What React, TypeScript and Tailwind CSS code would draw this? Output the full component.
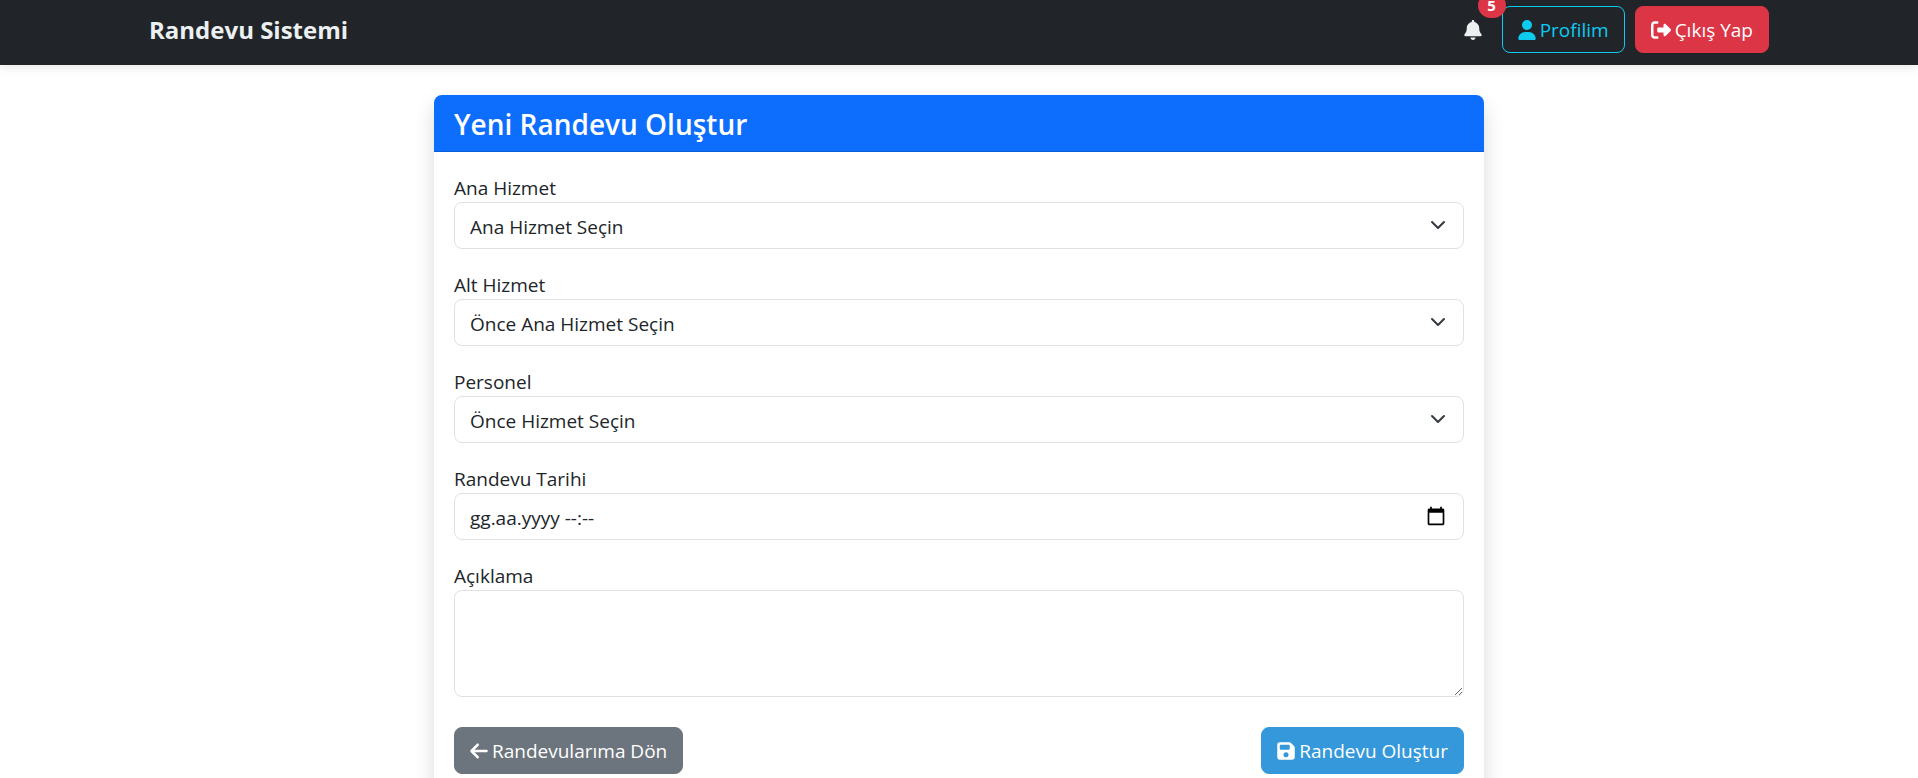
import type { ReactNode } from "react";
import { FaArrowLeft, FaBell, FaFloppyDisk, FaRightFromBracket, FaUser } from "react-icons/fa6";

const controlClass =
  "block w-full rounded-[8px] border border-[#dee2e6] bg-white px-[15px] text-[19px] leading-[30px] text-[#212529] placeholder:text-[#212529] placeholder:opacity-100 focus:border-[#86b7fe] focus:outline-none";

const buttonClass =
  "inline-flex h-[47px] items-center gap-1 rounded-[8px] border px-[15px] text-[19px] leading-[30px] whitespace-nowrap";

function Field({ id, label, children }: { id: string; label: string; children: ReactNode }) {
  return (
    <div>
      <label htmlFor={id} className="block pt-[2px] leading-[28px]">
        {label}
      </label>
      {children}
    </div>
  );
}

function SelectField({ id, label, option }: { id: string; label: string; option: string }) {
  return (
    <Field id={id} label={label}>
      <div className="relative">
        <select id={id} className={`${controlClass} h-[47px] appearance-none pt-[2px] pr-[45px]`}>
          <option>{option}</option>
        </select>
        <svg
          viewBox="0 0 16 16"
          className="pointer-events-none absolute top-[15px] right-[18px] size-4"
          fill="none"
          stroke="#343a40"
          strokeWidth="2"
          strokeLinecap="round"
          strokeLinejoin="round"
          aria-hidden="true"
        >
          <path d="m2 5 6 6 6-6" />
        </svg>
      </div>
    </Field>
  );
}

function Navbar() {
  return (
    <nav className="relative bg-[#212529] shadow-[0_2px_10px_rgba(0,0,0,0.1)]">
      <div className="mx-auto flex h-[65px] max-w-[1650px] items-start justify-between px-[15px] pt-[6px]">
        <a href="#" className="text-[24px] leading-[47px] font-bold text-[#ecf0f1]">
          Randevu Sistemi
        </a>
        <div className="flex items-center gap-[10px]">
          <a href="#" aria-label="Bildirimler" className="relative mr-[10px] text-[#ecf0f1]">
            <FaBell className="h-5 w-[18px]" />
            <span className="absolute -top-[27px] left-[14px] flex h-[25px] w-[28px] items-center justify-center rounded-full bg-[#dc3545] text-[15px] leading-none font-bold text-white">
              5
            </span>
          </a>
          <a href="#" className={`${buttonClass} border-[#0dcaf0] text-[#0dcaf0]`}>
            <FaUser className="h-5 w-[18px]" />
            Profilim
          </a>
          <a href="#" className={`${buttonClass} border-[#dc3545] bg-[#dc3545] text-white`}>
            <FaRightFromBracket className="size-5" />
            Çıkış Yap
          </a>
        </div>
      </div>
    </nav>
  );
}

export default function App() {
  return (
    <div className="min-h-screen bg-white font-['Open_Sans','Noto_Sans',sans-serif] text-[19px] leading-[30px] text-[#212529]">
      <Navbar />
      <main className="px-[15px] pt-[30px]">
        <section className="mx-auto max-w-[1050px] rounded-[8px] bg-white shadow-[0_10px_20px_rgba(0,0,0,0.15)]">
          <header className="rounded-t-[8px] border-b border-[#0b5ed7] bg-[#0d6efd] px-5 pt-[11px] pb-[9px]">
            <h1 className="text-[28px] leading-[36px] font-semibold text-white">Yeni Randevu Oluştur</h1>
          </header>
          <form className="flex flex-col gap-5 p-5" onSubmit={(event) => event.preventDefault()}>
            <SelectField id="main-service" label="Ana Hizmet" option="Ana Hizmet Seçin" />
            <SelectField id="sub-service" label="Alt Hizmet" option="Önce Ana Hizmet Seçin" />
            <SelectField id="staff" label="Personel" option="Önce Hizmet Seçin" />
            <Field id="date" label="Randevu Tarihi">
              <div className="relative">
                <input
                  id="date"
                  type="text"
                  placeholder="gg.aa.yyyy --:--"
                  className={`${controlClass} h-[47px] pt-[2px]`}
                />
                <button type="button" aria-label="Takvimi aç" className="absolute top-[13px] right-[18px]">
                  <svg viewBox="0 0 24 24" className="size-5" fill="#000" aria-hidden="true">
                    <path d="M20 3h-1V1h-2v2H7V1H5v2H4c-1.1 0-2 .9-2 2v16c0 1.1.9 2 2 2h16c1.1 0 2-.9 2-2V5c0-1.1-.9-2-2-2zm0 18H4V8h16v13z" />
                  </svg>
                </button>
              </div>
            </Field>
            <Field id="description" label="Açıklama">
              <textarea id="description" className={`${controlClass} h-[107px] py-[7px]`} />
            </Field>
            <div className="flex flex-wrap justify-between gap-[10px] pt-[10px]">
              <a href="#" className={`${buttonClass} border-[#6c757d] bg-[#6c757d] text-white`}>
                <FaArrowLeft className="h-5 w-[18px]" />
                Randevularıma Dön
              </a>
              <button type="submit" className={`${buttonClass} border-[#3498db] bg-[#3498db] text-white`}>
                <FaFloppyDisk className="h-5 w-[18px]" />
                Randevu Oluştur
              </button>
            </div>
          </form>
        </section>
      </main>
    </div>
  );
}
